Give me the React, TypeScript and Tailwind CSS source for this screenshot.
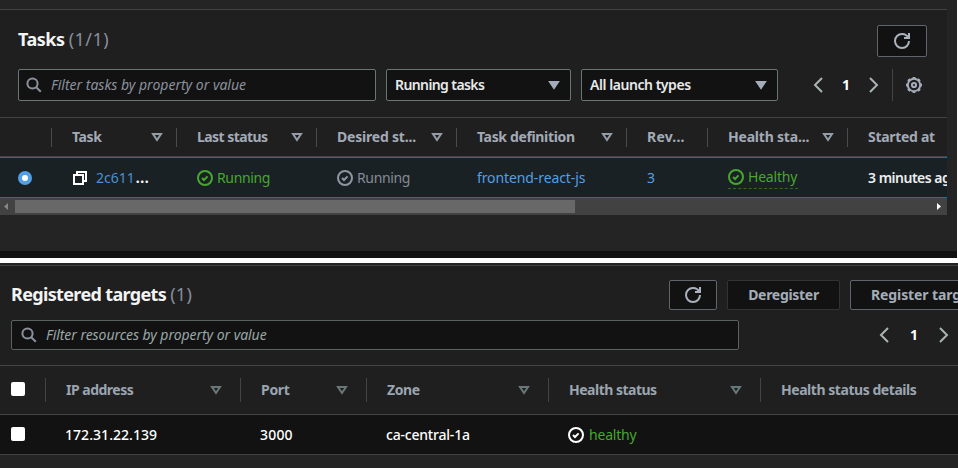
import React from 'react';

type IconProps = { className?: string };

const Refresh = ({ className = '' }: IconProps) => (
  <svg viewBox="0 0 16 16" className={`size-4 shrink-0 fill-none stroke-[#aab2be] stroke-2 ${className}`}>
    <path d="M10 5h5V0" />
    <path d="M15 8a6.957 6.957 0 0 1-7 7 6.957 6.957 0 0 1-7-7 6.957 6.957 0 0 1 7-7 6.870 6.870 0 0 1 6.300 4" />
  </svg>
);
const Search = ({ className = '' }: IconProps) => (
  <svg viewBox="0 0 16 16" className={`size-4 shrink-0 fill-none stroke-[#8b919c] stroke-2 ${className}`}>
    <circle cx="6.500" cy="6.500" r="5.100" />
    <path d="m10.200 10.200 4.600 4.600" />
  </svg>
);
const Caret = ({ className = '' }: IconProps) => (
  <svg viewBox="0 0 16 16" className={`size-4 shrink-0 fill-[#a5adba] stroke-[#a5adba] stroke-2 ${className}`}>
    <path d="M4 5h8l-4 6z" />
  </svg>
);
const Sort = ({ className = '' }: IconProps) => (
  <svg viewBox="0 0 16 16" className={`size-4 shrink-0 fill-none stroke-2 ${className}`}>
    <path d="M4 5h8l-4 6z" />
  </svg>
);
const Angle = ({ className = '' }: IconProps) => (
  <svg viewBox="0 0 16 16" className={`size-4 shrink-0 fill-none stroke-[#a9b4b4] stroke-2 ${className}`}>
    <path d="M12 1 5 8l7 7" />
  </svg>
);
const Gear = ({ className = '' }: IconProps) => (
  <svg viewBox="0 0 16 16" className={`size-4 shrink-0 fill-none stroke-[#a5adba] ${className}`}>
    <circle cx="8" cy="8" r="6.200" strokeWidth="2" />
    <circle cx="8" cy="8" r="7.300" strokeWidth="1.600" pathLength="80" strokeDasharray="5 5" strokeDashoffset="2.500" />
    <circle cx="8" cy="8" r="2.100" strokeWidth="2" />
  </svg>
);
const Copy = ({ className = '' }: IconProps) => (
  <svg viewBox="0 0 16 16" className={`size-4 shrink-0 fill-none stroke-white stroke-2 ${className}`}>
    <path d="M2 5h9v9H2z" />
    <path d="M5 5V2h9v9h-3" />
  </svg>
);
const Check = ({ className = '' }: IconProps) => (
  <svg viewBox="0 0 16 16" className={`size-4 shrink-0 fill-none stroke-2 ${className}`}>
    <circle cx="8" cy="8" r="7" />
    <path d="m5 8 2 2 3.600-3.600" />
  </svg>
);

type Col = { label: string; width: string; track: string; sort: boolean };

const taskCols: Col[] = [
  { label: 'Task', width: 'w-[125px]', track: 'tracking-[-0.4px]', sort: true },
  { label: 'Last status', width: 'w-[140px]', track: 'tracking-[-0.55px]', sort: true },
  { label: 'Desired st...', width: 'w-[140px]', track: 'tracking-[-0.2px]', sort: true },
  { label: 'Task definition', width: 'w-[170px]', track: 'tracking-[-0.35px]', sort: true },
  { label: 'Rev...', width: 'w-[81px]', track: 'tracking-[0.2px]', sort: false },
  { label: 'Health sta...', width: 'w-[140px]', track: 'tracking-[-0.2px]', sort: true },
  { label: 'Started at', width: 'w-[100px]', track: 'tracking-[-0.3px]', sort: false },
];

const targetCols: Col[] = [
  { label: 'IP address', width: 'w-[195px]', track: 'tracking-[-0.5px]', sort: true },
  { label: 'Port', width: 'w-[126px]', track: 'tracking-[-0.3px]', sort: true },
  { label: 'Zone', width: 'w-[182px]', track: 'tracking-[-0.4px]', sort: true },
  { label: 'Health status', width: 'w-[212px]', track: 'tracking-[-0.5px]', sort: true },
  { label: 'Health status details', width: 'w-[198px]', track: 'tracking-[-0.45px]', sort: false },
];

function Tasks() {
  return (
    <section className="h-[206px] w-[947px] overflow-hidden border-t border-[#424242] bg-[#1f1f1f]">
      <div className="flex h-[59px] items-start justify-between pr-5 pl-[18px] pt-[15px]">
        <h2 className="text-[18px] leading-[28px] font-bold tracking-[-0.5px] text-[#f2f3f3]">
          Tasks <span className="font-normal tracking-[0.5px] text-[#878e9b]">(1/1)</span>
        </h2>
        <button className="flex h-8 w-[50px] items-center justify-center rounded-[2px] border border-[#60646c] bg-[#121212]">
          <Refresh />
        </button>
      </div>
      <div className="flex h-[48px] items-start pl-[18px]">
        <div className="flex h-8 w-[358px] items-center rounded-[2px] border border-[#687674] bg-[#121212] pl-[7px] text-[#8b919c] italic">
          <Search />
          <span className="ml-[9px]">Filter tasks by property or value</span>
        </div>
        <div className="ml-[10px] flex h-8 w-[185px] items-center justify-between rounded-[2px] border border-[#687674] bg-[#121212] pr-2 pl-2 text-[#e8eaea]">
          <span className="font-semibold tracking-[-0.6px]">Running tasks</span>
          <Caret />
        </div>
        <div className="ml-[10px] flex h-8 w-[197px] items-center justify-between rounded-[2px] border border-[#687674] bg-[#121212] pr-2 pl-2 text-[#e8eaea]">
          <span className="font-semibold tracking-[-0.45px]">All launch types</span>
          <Caret />
        </div>
        <div className="ml-8 flex h-8 items-center">
          <Angle />
          <span className="w-[40px] text-center font-bold text-white">1</span>
          <Angle className="rotate-180" />
          <span className="ml-[10px] h-8 w-px bg-[#424448]" />
          <Gear className="ml-[13px]" />
        </div>
      </div>
      <div className="flex h-[40px] w-[947px] items-center overflow-hidden border-t border-b border-[#424242] pl-[51px]">
        {taskCols.map((c) => (
          <div key={c.label} className={`flex h-[19px] shrink-0 items-center justify-between border-l border-[#484b50] pr-[11px] pl-5 font-bold whitespace-nowrap text-[#a2aab6] ${c.width}`}>
            <span className={c.track}>{c.label}</span>
            {c.sort && <Sort className="stroke-[#949ca8]" />}
          </div>
        ))}
      </div>
      <div className="flex h-[41px] w-[947px] items-center overflow-hidden border-t border-b border-[#0a7ba3] bg-[#1a2124] whitespace-nowrap">
        <span className="ml-[18px] flex size-[14px] shrink-0 items-center justify-center rounded-full bg-[#539fe5]">
          <span className="size-[6px] rounded-full bg-white" />
        </span>
        <div className="ml-10 flex w-[125px] shrink-0 items-center">
          <Copy />
          <span className="ml-2 text-[#4a90d6]">2c611</span>
          <span className="ml-px font-bold tracking-[0.6px] text-white">...</span>
        </div>
        <div className="flex w-[140px] shrink-0 items-center text-[#46a72e]">
          <Check className="stroke-[#46a72e]" />
          <span className="ml-1 tracking-[-0.35px]">Running</span>
        </div>
        <div className="flex w-[140px] shrink-0 items-center text-[#858b95]">
          <Check className="stroke-[#8f96a1]" />
          <span className="ml-1 tracking-[-0.35px]">Running</span>
        </div>
        <span className="w-[170px] shrink-0 tracking-[-0.1px] text-[#539fe5]">frontend-react-js</span>
        <span className="w-[81px] shrink-0 text-[#539fe5]">3</span>
        <div className="-mt-px flex w-[140px] shrink-0">
          <div className="flex h-[24px] w-[70px] items-center border-b border-dashed border-[#2f6d22] text-[#46a72e]">
            <Check className="stroke-[#46a72e]" />
            <span className="ml-1 tracking-[-0.2px]">Healthy</span>
          </div>
        </div>
        <span className="shrink-0 font-semibold tracking-[-0.5px] text-[#eceeee]">3 minutes ago</span>
      </div>
      <div className="flex h-[17px] items-center justify-between bg-[#424242]">
        <svg viewBox="0 0 15 17" className="h-[17px] w-[15px] fill-[#868686]"><path d="M8 5v7L4 8.500z" /></svg>
        <div className="mr-auto h-[13px] w-[560px] bg-[#686868]" />
        <svg viewBox="0 0 15 17" className="h-[17px] w-[15px] fill-white"><path d="M5 5v7l4-3.500z" /></svg>
      </div>
    </section>
  );
}

function Targets() {
  return (
    <section className="mt-[2px] h-[190px] w-[958px] overflow-hidden border-t border-b border-[#424242] bg-[#1f1f1f]">
      <div className="flex h-[54px] items-start pt-[14px] pl-[11px]">
        <h2 className="w-[658px] shrink-0 text-[18px] leading-[28px] font-bold tracking-[-0.65px] text-[#f2f3f3]">
          Registered targets <span className="font-normal tracking-[0.3px] text-[#878e9b]">(1)</span>
        </h2>
        <button className="flex h-[30px] w-12 shrink-0 items-center justify-center rounded-[2px] border border-[#60646c] bg-[#121212]">
          <Refresh />
        </button>
        <button className="ml-[10px] h-[30px] w-[113px] shrink-0 rounded-[2px] border border-[#323335] bg-[#121212] font-bold tracking-[-0.3px] text-[#a5adb8]">
          Deregister
        </button>
        <button className="ml-[10px] h-[30px] w-[150px] shrink-0 rounded-[2px] border border-[#60646c] bg-[#121212] pl-5 text-left font-bold tracking-[-0.1px] whitespace-nowrap text-[#a5adb8]">
          Register targets
        </button>
      </div>
      <div className="flex h-[45px] items-start pl-[11px]">
        <div className="flex h-[30px] w-[728px] shrink-0 items-center rounded-[2px] border border-[#596360] bg-[#121212] pl-[9px] text-[#9aa7a7] italic">
          <Search />
          <span className="ml-[9px] tracking-[-0.05px]">Filter resources by property or value</span>
        </div>
        <div className="ml-[137px] flex h-[30px] shrink-0 items-center">
          <Angle />
          <span className="w-[44px] text-center font-bold text-white">1</span>
          <Angle className="rotate-180" />
        </div>
      </div>
      <div className="flex h-[50px] items-center border-t border-b border-[#424448] pl-[11px]">
        <span className="mr-5 -mt-0.5 size-[14px] shrink-0 rounded-[2px] bg-white" />
        {targetCols.map((c) => (
          <div key={c.label} className={`flex h-6 shrink-0 items-center justify-between border-l border-[#424448] pr-4 pl-5 font-bold whitespace-nowrap text-[#9ba5b0] ${c.width}`}>
            <span className={c.track}>{c.label}</span>
            {c.sort && <Sort className="stroke-[#687878]" />}
          </div>
        ))}
      </div>
      <div className="flex h-[39px] items-center bg-[#121212] pl-[11px] font-medium text-white">
        <span className="mr-10 -mt-0.5 size-[14px] shrink-0 rounded-[2px] bg-white" />
        <span className="w-[195px] tracking-[0.05px]">172.31.22.139</span>
        <span className="w-[126px] tracking-[0.2px]">3000</span>
        <span className="w-[182px] tracking-[-0.2px]">ca-central-1a</span>
        <Check className="stroke-white" />
        <span className="ml-[5px] font-normal tracking-[-0.2px] text-[#46a72e]">healthy</span>
      </div>
    </section>
  );
}

export default function App() {
  return (
    <main className="h-[468px] w-[958px] overflow-hidden bg-[#242424] font-['Noto_Sans','Open_Sans',sans-serif] text-[14px] leading-5">
      <div className="h-[258px] border-r border-white bg-[#242424] pt-[9px]">
        <Tasks />
        <div className="mt-9 h-[7px] bg-[#121212]" />
      </div>
      <div className="h-[5px] bg-white" />
      <Targets />
    </main>
  );
}
